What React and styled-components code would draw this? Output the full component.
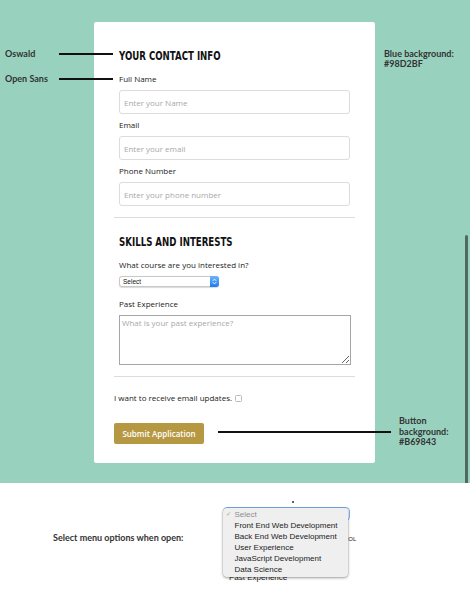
import React from 'react'
import styled, { createGlobalStyle } from 'styled-components'

const GlobalStyle = createGlobalStyle`
  html, body {
    margin: 0;
    padding: 0;
    background: #fff;
  }
  body {
    font-family: "Open Sans", "Liberation Sans", sans-serif;
  }
  * {
    box-sizing: border-box;
  }
`

const Page = styled.div`
  width: 470px;
  height: 609px;
  overflow: hidden;
  background: #fff;
`

// mockup area with the blue-green background
const Stage = styled.section`
  position: relative;
  height: 483px;
  background: #98D2BF;
  padding: 22px 0 0 94px;
`

const Card = styled.form`
  width: 281px;
  background: #fff;
  border-radius: 2px;
  padding: 25px 20px 19px;
`

const Group = styled.div`
  padding: 0 5px;
`

// Oswald stand-in: condensed bold squeezed a little more
const Heading = styled.h2`
  margin: 0 0 8px;
  font-family: "DejaVu Sans Condensed", "DejaVu Sans", sans-serif;
  font-weight: 700;
  font-size: 12px;
  line-height: 18px;
  color: #111;
  text-transform: uppercase;
  transform: scaleX(0.8);
  transform-origin: left center;
  white-space: nowrap;
`

const Field = styled.div`
  display: flex;
  flex-direction: column;
  align-items: flex-start;
  margin-bottom: ${p => p.$gap ?? 5}px;
`

const Label = styled.label`
  font-size: 8px;
  line-height: 12px;
  color: #222;
  margin-bottom: 5px;
`

const TextInput = styled.input`
  width: 231px;
  height: 24px;
  border: 1px solid #dcdcdc;
  border-radius: 3px;
  padding: 0 4px;
  font: 8px "Open Sans", sans-serif;
  color: #333;
  outline: none;

  &::placeholder {
    color: #a8a8a8;
  }
`

const TextArea = styled.textarea`
  display: block;
  width: 232px;
  height: 50px;
  border: 1px solid #a6a6a6;
  border-radius: 0;
  padding: 1px 2px;
  font: 8px/11px "Open Sans", sans-serif;
  color: #333;
  outline: none;
  resize: vertical;

  &::placeholder {
    color: #a8a8a8;
  }
`

const SelectWrap = styled.div`
  position: relative;
  width: 100px;
  height: 11px;
`

const NativeSelect = styled.select`
  appearance: none;
  display: block;
  width: 100%;
  height: 100%;
  margin: 0;
  border: 1px solid #c9c9c9;
  border-radius: 3px;
  padding: 0 0 0 3px;
  font: 6.5px "Liberation Sans", Arial, sans-serif;
  color: #111;
  background: #fff;
  box-shadow: 0 0.5px 1px rgba(0, 0, 0, 0.15);
  outline: none;
`

const Stepper = styled.span`
  position: absolute;
  top: 0;
  right: 0;
  width: 9px;
  height: 11px;
  border-radius: 0 3px 3px 0;
  background: linear-gradient(#6db4fb, #1e7bef);
  display: flex;
  align-items: center;
  justify-content: center;
  pointer-events: none;
`

const Divider = styled.hr`
  border: 0;
  border-top: 1px solid #dcdcdc;
  margin: 11px 0 15px;
`

const CheckRow = styled.label`
  display: flex;
  align-items: center;
  font-size: 8px;
  line-height: 12px;
  color: #222;
`

const Checkbox = styled.input.attrs({ type: 'checkbox' })`
  appearance: none;
  width: 7px;
  height: 7px;
  margin: 1px 0 0 3px;
  border: 1px solid #b8b8b8;
  border-radius: 1.5px;
  background: #fff;
`

const SubmitButton = styled.button`
  display: block;
  margin-top: 19px;
  width: 90px;
  height: 21px;
  padding: 0;
  background: #B69843;
  color: #fff;
  border: 0;
  border-radius: 2px;
  font: 600 8px "Open Sans", sans-serif;
`

// design annotations laid over the mockup
const Note = styled.div`
  position: absolute;
  left: ${p => p.$x}px;
  top: ${p => p.$y}px;
  font: 700 9px/10px "Lato", sans-serif;
  color: #333;
  white-space: nowrap;
`

const LeftNote = styled(Note)`
  display: grid;
  grid-template-columns: 54px 54px;
  align-items: center;
`

const RowNote = styled(Note)`
  display: flex;
  align-items: center;
  gap: 8px;
  line-height: 10.5px;
`

const Rule = styled.span`
  display: block;
  width: ${p => p.$w ?? 54}px;
  height: 1.5px;
  background: #111;
`

const Scrollbar = styled.div`
  position: absolute;
  right: 2px;
  top: 235px;
  bottom: 0;
  width: 3px;
  background: #4e695e;
  border-radius: 2px 2px 0 0;
`

const Bottom = styled.section`
  display: flex;
  align-items: flex-start;
  height: 126px;
  padding-left: 53px;
`

const Caption = styled.p`
  margin: 50px 0 0;
  width: 170px;
  font: 700 9px/10px "Lato", sans-serif;
  color: #333;
`

// cropped screenshot of the open select
const Snippet = styled.div`
  position: relative;
  margin-top: 17px;
  width: 140px;
  height: 86px;
  font-family: "Liberation Sans", Arial, sans-serif;
`

const Dot = styled.span`
  position: absolute;
  left: 69px;
  top: 1px;
  width: 1.5px;
  height: 1.5px;
  border-radius: 50%;
  background: #444;
`

const FocusedSelect = styled.span`
  position: absolute;
  left: 0;
  top: 7px;
  width: 127px;
  height: 14px;
  border: 1.5px solid #7db0f2;
  border-radius: 4px;
`

const Peek = styled.span`
  position: absolute;
  left: ${p => p.$x}px;
  top: ${p => p.$y}px;
  font-size: ${p => p.$size}px;
  line-height: 1.15;
  color: #222;
  white-space: nowrap;
`

const Menu = styled.ul`
  position: absolute;
  left: 0;
  top: 8px;
  z-index: 1;
  width: 125px;
  list-style: none;
  margin: 0;
  padding: 1px 0 2px;
  background: #efefef;
  border-radius: 4px;
  box-shadow: 0 1px 3px rgba(0, 0, 0, 0.35), 0 0 0 0.5px rgba(0, 0, 0, 0.12);
  font-size: 8px;
  line-height: 11px;
`

const Option = styled.li`
  display: flex;
  padding-left: 3px;
  color: ${p => (p.$muted ? '#8c8c8c' : '#222')};
`

const Tick = styled.span`
  width: 8.5px;
  font-size: 6px;
  color: #9a9a9a;
`

const courses = [
  'Front End Web Development',
  'Back End Web Development',
  'User Experience',
  'JavaScript Development',
  'Data Science',
]

function App() {
  return (
    <Page>
      <GlobalStyle />
      <Stage>
        <Card onSubmit={e => e.preventDefault()}>
          <Group>
            <Heading>Your Contact Info</Heading>
            <Field>
              <Label htmlFor="name">Full Name</Label>
              <TextInput id="name" placeholder="Enter your Name" />
            </Field>
            <Field>
              <Label htmlFor="email">Email</Label>
              <TextInput id="email" placeholder="Enter your email" />
            </Field>
            <Field>
              <Label htmlFor="phone">Phone Number</Label>
              <TextInput id="phone" placeholder="Enter your phone number" />
            </Field>
          </Group>
          <Divider />
          <Group>
            <Heading>Skills and Interests</Heading>
            <Field $gap={11}>
              <Label htmlFor="course">What course are you interested in?</Label>
              <SelectWrap>
                <NativeSelect id="course" defaultValue="">
                  <option value="">Select</option>
                  {courses.map(c => (
                    <option key={c}>{c}</option>
                  ))}
                </NativeSelect>
                <Stepper>
                  <svg width="5" height="7" viewBox="0 0 5 7" fill="none" stroke="#fff" strokeWidth="0.9" strokeLinecap="round" strokeLinejoin="round">
                    <path d="M1 2.6 2.5 1.1 4 2.6" />
                    <path d="M1 4.4 2.5 5.9 4 4.4" />
                  </svg>
                </Stepper>
              </SelectWrap>
            </Field>
            <Field>
              <Label htmlFor="past">Past Experience</Label>
              <TextArea id="past" placeholder="What is your past experience?" />
            </Field>
          </Group>
          <Divider />
          <CheckRow>
            I want to receive email updates.
            <Checkbox />
          </CheckRow>
          <SubmitButton type="submit">Submit Application</SubmitButton>
        </Card>

        <LeftNote $x={5} $y={49}>
          <span>Oswald</span>
          <Rule />
        </LeftNote>
        <LeftNote $x={5} $y={74}>
          <span>Open Sans</span>
          <Rule />
        </LeftNote>
        <Note $x={384} $y={49}>
          Blue background:
          <br />
          #98D2BF
        </Note>
        <RowNote $x={218} $y={416}>
          <Rule $w={173} />
          <div>
            Button
            <br />
            background:
            <br />
            #B69843
          </div>
        </RowNote>
        <Scrollbar />
      </Stage>

      <Bottom>
        <Caption>Select menu options when open:</Caption>
        <Snippet>
          <Dot />
          <FocusedSelect />
          <Peek $x={121} $y={36} $size={6}>COL</Peek>
          <Peek $x={6} $y={73} $size={8}>Past Experience</Peek>
          <Menu>
            <Option $muted>
              <Tick>✓</Tick>
              Select
            </Option>
            {courses.map(c => (
              <Option key={c}>
                <Tick />
                {c}
              </Option>
            ))}
          </Menu>
        </Snippet>
      </Bottom>
    </Page>
  )
}

export default App
